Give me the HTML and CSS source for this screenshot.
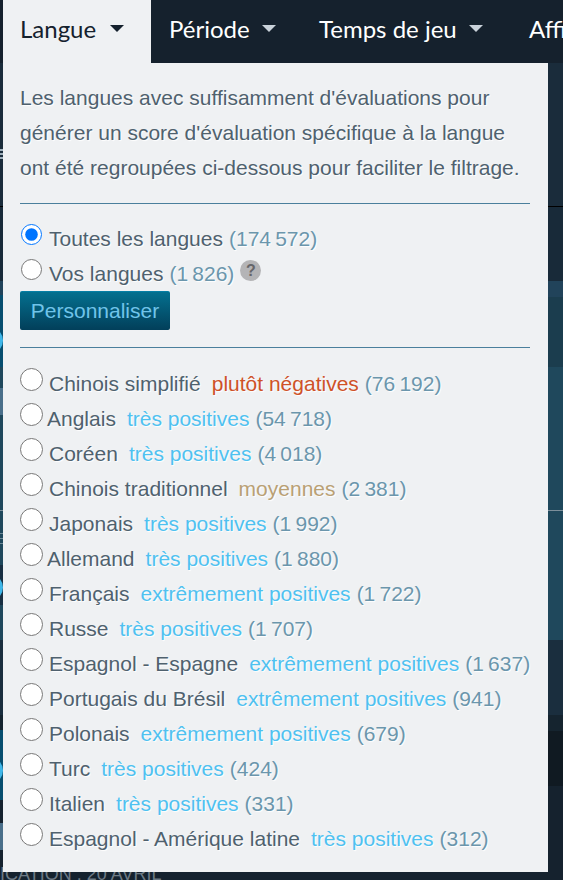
FILE: index.html
```html
<!DOCTYPE html>
<html lang="fr">
<head>
    <meta charset="UTF-8">
    <meta name="viewport" content="width=device-width, initial-scale=1.0">
    <title>Filtres des évaluations</title>
    <link rel="stylesheet" href="styles.css">
</head>
<body>
    <div class="page">
        <nav class="nav">
            <div class="tab tab-active">Langue <span class="caret"></span></div>
            <div class="tab">Période <span class="caret"></span></div>
            <div class="tab">Temps de jeu <span class="caret"></span></div>
            <div class="tab">Affichage <span class="caret"></span></div>
        </nav>

        <div class="backdrop">
            <div class="band band-a"></div>
            <div class="band band-b"></div>
            <div class="band band-c"></div>
            <div class="band band-d"></div>
            <div class="band band-e"></div>
            <div class="band band-f"></div>
            <div class="band band-g"></div>
            <div class="band band-h"></div>
            <div class="band band-i"><span class="release">Publication : 20 avril</span></div>
            <i class="strip strip-bits1"></i>
            <i class="strip strip-blue1"></i>
            <i class="strip strip-light1"></i>
            <i class="strip strip-bits2"></i>
            <i class="strip strip-dark"></i>
            <i class="strip strip-blue2"></i>
            <i class="strip strip-light2"></i>
            <i class="blob blob1"></i>
            <i class="blob blob2"></i>
            <i class="blob blob3"></i>
        </div>

        <div class="panel">
            <p class="intro">Les langues avec suffisamment d'évaluations pour générer un score d'évaluation spécifique à la langue ont été regroupées ci-dessous pour faciliter le filtrage.</p>
            <hr class="rule rule-top">

            <label class="row row-top"><input type="radio" name="lang" checked><span class="name">Toutes les langues</span> <span class="count">(174&#8201;572)</span></label>
            <label class="row row-top"><input type="radio" name="lang"><span class="name">Vos langues</span> <span class="count">(1&#8201;826)</span><span class="help">?</span></label>
            <button class="btn">Personnaliser</button>
            <hr class="rule rule-bottom">

            <label class="row"><input type="radio" name="lang"><span class="name">Chinois simplifié</span><span class="score negative">plutôt négatives</span> <span class="count">(76&#8201;192)</span></label>
            <label class="row row-tight"><input type="radio" name="lang"><span class="name">Anglais</span><span class="score positive">très positives</span> <span class="count">(54&#8201;718)</span></label>
            <label class="row"><input type="radio" name="lang"><span class="name">Coréen</span><span class="score positive">très positives</span> <span class="count">(4&#8201;018)</span></label>
            <label class="row"><input type="radio" name="lang"><span class="name">Chinois traditionnel</span><span class="score mixed">moyennes</span> <span class="count">(2&#8201;381)</span></label>
            <label class="row"><input type="radio" name="lang"><span class="name">Japonais</span><span class="score positive">très positives</span> <span class="count">(1&#8201;992)</span></label>
            <label class="row row-tight"><input type="radio" name="lang"><span class="name">Allemand</span><span class="score positive">très positives</span> <span class="count">(1&#8201;880)</span></label>
            <label class="row"><input type="radio" name="lang"><span class="name">Français</span><span class="score positive">extrêmement positives</span> <span class="count">(1&#8201;722)</span></label>
            <label class="row"><input type="radio" name="lang"><span class="name">Russe</span><span class="score positive">très positives</span> <span class="count">(1&#8201;707)</span></label>
            <label class="row"><input type="radio" name="lang"><span class="name">Espagnol - Espagne</span><span class="score positive">extrêmement positives</span> <span class="count">(1&#8201;637)</span></label>
            <label class="row"><input type="radio" name="lang"><span class="name">Portugais du Brésil</span><span class="score positive">extrêmement positives</span> <span class="count">(941)</span></label>
            <label class="row"><input type="radio" name="lang"><span class="name">Polonais</span><span class="score positive">extrêmement positives</span> <span class="count">(679)</span></label>
            <label class="row"><input type="radio" name="lang"><span class="name">Turc</span><span class="score positive">très positives</span> <span class="count">(424)</span></label>
            <label class="row"><input type="radio" name="lang"><span class="name">Italien</span><span class="score positive">très positives</span> <span class="count">(331)</span></label>
            <label class="row"><input type="radio" name="lang"><span class="name">Espagnol - Amérique latine</span><span class="score positive">très positives</span> <span class="count">(312)</span></label>
        </div>
    </div>
</body>
</html>
```

FILE: styles.css
```css
* {
    box-sizing: border-box;
}
html, body {
    margin: 0;
    height: 100%;
    overflow: hidden;
    background-color: #15222e;
}
.page {
    position: relative;
    width: 563px;
    height: 880px;
    overflow: hidden;
}

/* top bar */
.nav {
    display: flex;
    height: 63px;
    padding-left: 3px;
    background-color: #15212d;
    font-family: Lato, "Open Sans", sans-serif;
    font-size: 24px;
    color: #ffffff;
    white-space: nowrap;
}
.tab {
    flex: none;
    display: flex;
    align-items: center;
    gap: 12px;
    padding: 0 0 6px 18px;
    height: 63px;
}
.tab:nth-child(1) {
    width: 148px;
    padding-left: 17px;
}
.tab:nth-child(2) {
    width: 150px;
}
.tab:nth-child(3) {
    width: 210px;
}
.tab-active {
    background-color: #eff1f3;
    color: #15212d;
}
.caret {
    width: 0;
    height: 0;
    border-left: 7px solid transparent;
    border-right: 7px solid transparent;
    border-top: 7px solid #c9d2da;
}
.tab-active .caret {
    margin-left: 2px;
    border-top-color: #15212d;
}

/* what lies behind the menu */
.backdrop {
    position: relative;
    display: flex;
    flex-direction: column;
    height: 817px;
}
.band-a { height: 144px; background-color: #1a2c3b; border-bottom: 1px solid #000000; }
.band-b { height: 74px; background-color: #182a39; }
.band-c { height: 16px; background-color: #21435a; }
.band-d { height: 70px; background-color: #1b3d4e; }
.band-e { height: 273px; background-color: #1f485c; background-image: linear-gradient(#7c8f9b, #7c8f9b); background-size: 100% 1px; background-position: 0 143px; background-repeat: no-repeat; }
.band-f { height: 75px; background-color: #1a2e3e; }
.band-g { height: 16px; background-color: #15242f; }
.band-h { height: 55px; background-color: #101a22; }
.band-i { height: 94px; background-color: #15222e; }
.release {
    position: absolute;
    left: -47px;
    top: 801px;
    font-family: "Liberation Sans", Arial, sans-serif;
    font-size: 18px;
    color: #6d7a85;
    text-transform: uppercase;
    white-space: nowrap;
}
.strip {
    position: absolute;
    left: 0;
    width: 4px;
}
.strip-bits1 { top: 86px; height: 11px; background: repeating-linear-gradient(#9fb0bc 0 2px, #1a2c3b 2px 4px); }
.strip-blue1 { top: 232px; height: 72px; background-color: #074e6f; }
.strip-light1 { top: 325px; height: 27px; background-color: #4a6f8a; }
.strip-bits2 { top: 470px; height: 11px; background: repeating-linear-gradient(#6f8a99 0 1px, #1f485c 1px 5px); }
.strip-dark { top: 502px; height: 40px; background-color: #182f42; }
.strip-blue2 { top: 667px; height: 70px; background-color: #074e6f; }
.strip-light2 { top: 760px; height: 27px; background-color: #4a6f8a; }
.blob {
    position: absolute;
    left: -24px;
    width: 27px;
    height: 27px;
    border-radius: 50%;
    background-color: #3fb6e8;
}
.blob1 { top: 264px; }
.blob2 { top: 511px; }
.blob3 { top: 694px; }

/* dropdown */
.panel {
    position: absolute;
    left: 3px;
    top: 63px;
    width: 545px;
    height: 809px;
    padding: 17px 18px 0 17px;
    background-color: #eff1f3;
    font-family: "Liberation Sans", Arial, sans-serif;
    font-size: 21px;
    line-height: 35px;
    color: #4f616e;
    text-shadow: 1px 1px 1px #ffffff;
}
.intro {
    margin: 0;
}
.rule {
    height: 1px;
    margin: 0;
    border: none;
    background-color: #4a7f9c;
}
.rule-top {
    margin: 18px 0 17px;
}
.rule-bottom {
    margin: 17px 0 18px;
}
.row {
    display: flex;
    height: 35px;
    white-space: nowrap;
}
.row input {
    flex: none;
    width: 23px;
    height: 23px;
    margin: 2px 6px 0 0;
}
.row-top input {
    width: 21px;
    height: 21px;
    margin: 3px 7px 0 1px;
}
.row-tight input {
    margin-right: 4px;
}
.count {
    margin-left: 6px;
    color: #6b96ac;
}
.score {
    margin-left: 11px;
}
.positive {
    color: #4fc1f0;
}
.negative {
    color: #cf5228;
}
.mixed {
    color: #b9a074;
}
.help {
    width: 21px;
    height: 21px;
    margin: 4px 0 0 6px;
    border-radius: 50%;
    background-color: #b4b4b6;
    color: #66666a;
    font-size: 16px;
    font-weight: bold;
    line-height: 21px;
    text-align: center;
    text-shadow: none;
}
.btn {
    display: block;
    width: 150px;
    height: 39px;
    margin: 0;
    padding: 0;
    border: none;
    border-top: 1px solid #067fa5;
    border-radius: 2px;
    background: linear-gradient(#04708f, #023f5a);
    color: #70c4ea;
    font-family: "Liberation Sans", Arial, sans-serif;
    font-size: 21px;
}
```
